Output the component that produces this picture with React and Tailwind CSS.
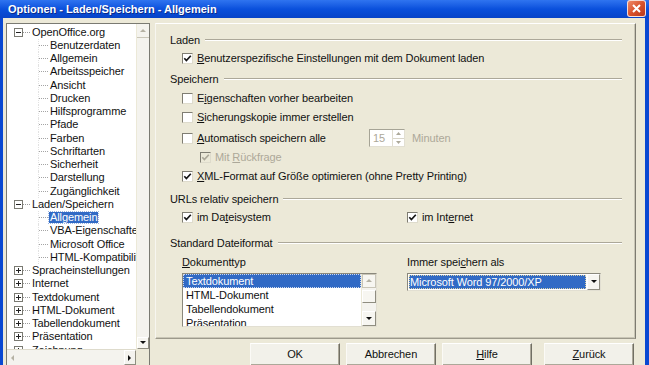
import React from "react";

const TREE = [
  ["OpenOffice.org", 0, "-"],
  ["Benutzerdaten", 1],
  ["Allgemein", 1],
  ["Arbeitsspeicher", 1],
  ["Ansicht", 1],
  ["Drucken", 1],
  ["Hilfsprogramme", 1],
  ["Pfade", 1],
  ["Farben", 1],
  ["Schriftarten", 1],
  ["Sicherheit", 1],
  ["Darstellung", 1],
  ["Zugänglichkeit", 1],
  ["Laden/Speichern", 0, "-"],
  ["Allgemein", 1, null, true],
  ["VBA-Eigenschaften", 1],
  ["Microsoft Office", 1],
  ["HTML-Kompatibilität", 1],
  ["Spracheinstellungen", 0, "+"],
  ["Internet", 0, "+"],
  ["Textdokument", 0, "+"],
  ["HTML-Dokument", 0, "+"],
  ["Tabellendokument", 0, "+"],
  ["Präsentation", 0, "+"],
  ["Zeichnung", 0, "+"],
];

function U({ children }) {
  return <span className="underline underline-offset-[1px]">{children}</span>;
}

function ExpandBox({ sign }) {
  return (
    <svg width="9" height="9" viewBox="0 0 9 9" className="shrink-0">
      <rect x="0.5" y="0.5" width="8" height="8" fill="#fff" stroke="#7a7a72" />
      <line x1="2" y1="4.5" x2="7" y2="4.5" stroke="#222" />
      {sign === "+" && <line x1="4.5" y1="2" x2="4.5" y2="7" stroke="#222" />}
    </svg>
  );
}

function Arrow({ dir, color = "#111" }) {
  const d = {
    up: "M1 5 L4 2 L7 5 Z",
    down: "M1 2 L4 5 L7 2 Z",
    left: "M5 1 L2 4 L5 7 Z",
    right: "M2 1 L5 4 L2 7 Z",
  }[dir];
  return (
    <svg width="8" height="8" viewBox="0 0 8 8">
      <path d={d} fill={color} />
    </svg>
  );
}

function Check({ checked, disabled }) {
  return (
    <span
      className={`w-[11px] h-[11px] shrink-0 flex items-center justify-center border border-t-[#7f7d72] border-l-[#7f7d72] border-r-[#dedbcc] border-b-[#dedbcc] ${
        disabled ? "bg-[#ece9d8]" : "bg-white"
      }`}
    >
      {checked && (
        <svg width="9" height="9" viewBox="0 0 9 9">
          <path
            d="M1.3 4.3 L3.4 6.6 L7.8 1.8"
            fill="none"
            stroke={disabled ? "#aca899" : "#151515"}
            strokeWidth="1.7"
          />
        </svg>
      )}
    </span>
  );
}

function Heading({ children, mt }) {
  return (
    <div className={`flex items-center h-[14px] pl-[14px] pr-[13px] ${mt}`}>
      <span className="whitespace-nowrap">{children}</span>
      <div className="flex-1 ml-[5px] border-t border-t-[#aca899] border-b border-b-white" />
    </div>
  );
}

function CheckRow({ checked, disabled, children, mt, pl = "pl-[26px]" }) {
  return (
    <div className={`flex items-center h-[14px] gap-[4px] ${pl} ${mt}`}>
      <Check checked={checked} disabled={disabled} />
      <span className={`whitespace-nowrap ${disabled ? "text-[#aca899]" : ""}`}>{children}</span>
    </div>
  );
}

function Button({ children, className = "" }) {
  return (
    <div
      className={`w-[90px] h-[23px] shrink-0 flex items-center justify-center bg-[#f2f1ea] border border-t-white border-l-[#fbfaf6] border-r-[#716f64] border-b-[#716f64] shadow-[inset_-1px_-1px_0_#aca899] ${className}`}
    >
      {children}
    </div>
  );
}

function Tree() {
  return (
    <div className="w-[144px] h-[345px] shrink-0 border border-[#7a7a72] flex flex-col bg-[#ece9d8]">
      <div className="flex h-[325px]">
        <div className="flex-1 bg-white overflow-hidden pt-[1.5px]">
          {TREE.map(([t, lvl, box, sel], i) => (
            <div key={i} className="h-[13.25px] flex items-center whitespace-nowrap">
              {lvl === 0 ? (
                <>
                  <div className="ml-[7px]">
                    <ExpandBox sign={box} />
                  </div>
                  <div className="w-[7px] border-t border-dotted border-[#9a9a9a]" />
                  <span className="ml-[2px]">{t}</span>
                </>
              ) : (
                <>
                  <div className="ml-[31px] h-full flex items-center border-l border-dotted border-[#e2e2e2]">
                    <div className="w-[9px] border-t border-dotted border-[#a4a4a4]" />
                  </div>
                  <span
                    className={`ml-[1px] px-[1px] ${
                      sel ? "bg-[#316ac5] text-white outline outline-dotted outline-[#9fb7e0]" : ""
                    }`}
                  >
                    {t}
                  </span>
                </>
              )}
            </div>
          ))}
        </div>
        <div className="w-[13px] flex flex-col bg-[#f4f3ee] border-l border-[#ece9d8]">
          <div className="h-[14px] flex items-center justify-center border-b border-[#c9c6b8]">
            <Arrow dir="up" color="#b5b2a4" />
          </div>
          <div className="flex-1" />
          <div className="h-[12px] flex items-center justify-center bg-[#f7f6f1] border border-t-white border-l-white border-r-[#8f8d80] border-b-[#8f8d80]">
            <Arrow dir="down" />
          </div>
        </div>
      </div>
      <div className="flex h-[16px]">
        <div className="w-[129px] flex items-center justify-between bg-[#f4f3ee] border-t border-[#dedbcc]">
          <div className="w-[12px] h-full flex items-center justify-center">
            <Arrow dir="left" color="#b5b2a4" />
          </div>
          <div className="w-[12px] h-full flex items-center justify-center border border-t-white border-l-white border-r-[#8f8d80] border-b-[#8f8d80]">
            <Arrow dir="right" />
          </div>
        </div>
        <div className="flex-1 bg-[#ece9d8]" />
      </div>
    </div>
  );
}

function Panel() {
  return (
    <div className="h-[316px] border border-t-white border-l-[#f7f6f0] border-r-[#7d7b70] border-b-[#9c998b] shadow-[inset_-1px_-1px_0_#c9c6b6]">
      <Heading mt="mt-[9px]">Laden</Heading>
      <CheckRow checked mt="mt-[4px]">
        <U>B</U>enutzerspezifische Einstellungen mit dem Dokument laden
      </CheckRow>
      <Heading mt="mt-[7px]">Speichern</Heading>
      <CheckRow mt="mt-[5px]">
        E<U>i</U>genschaften vorher bearbeiten
      </CheckRow>
      <CheckRow mt="mt-[5px]">
        <U>S</U>icherungskopie immer erstellen
      </CheckRow>
      <div className="flex items-center h-[18px] mt-[5px] pl-[26px]">
        <div className="w-[187px] flex items-center gap-[4px]">
          <Check />
          <span className="whitespace-nowrap">
            <U>A</U>utomatisch speichern alle
          </span>
        </div>
        <div className="w-[36px] h-[18px] flex items-center bg-white border border-t-[#a6a496] border-l-[#a6a496] border-r-[#e2dfd2] border-b-[#e2dfd2]">
          <span className="flex-1 pl-[3px] text-[#aca899]">15</span>
          <div className="w-[12px] h-full flex flex-col border-l border-[#e0ddd0]">
            <div className="flex-1 flex items-center justify-center border-b border-[#d8d5c8]">
              <svg width="5" height="3" viewBox="0 0 5 3">
                <path d="M0 3 L2.5 0 L5 3 Z" fill="#aca899" />
              </svg>
            </div>
            <div className="flex-1 flex items-center justify-center">
              <svg width="5" height="3" viewBox="0 0 5 3">
                <path d="M0 0 L2.5 3 L5 0 Z" fill="#aca899" />
              </svg>
            </div>
          </div>
        </div>
        <span className="ml-[7px] text-[#aca899]">Minuten</span>
      </div>
      <CheckRow checked disabled mt="mt-[3px]" pl="pl-[44px]">
        Mit <U>R</U>ückfrage
      </CheckRow>
      <CheckRow checked mt="mt-[5px]">
        <U>X</U>ML-Format auf Größe optimieren (ohne Pretty Printing)
      </CheckRow>
      <Heading mt="mt-[9px]">URLs relativ speichern</Heading>
      <div className="flex items-center h-[14px] mt-[4px] pl-[26px]">
        <div className="w-[225px] flex items-center gap-[4px]">
          <Check checked />
          <span>
            im Da<U>t</U>eisystem
          </span>
        </div>
        <div className="flex items-center gap-[4px]">
          <Check checked />
          <span>
            im Int<U>e</U>rnet
          </span>
        </div>
      </div>
      <Heading mt="mt-[12px]">Standard Dateiformat</Heading>
      <div className="flex items-center h-[14px] mt-[5px] pl-[26px]">
        <span className="w-[225px]">
          <U>D</U>okumenttyp
        </span>
        <span>
          Immer spei<U>c</U>hern als
        </span>
      </div>
      <div className="flex items-start mt-[4px] pl-[26px]">
        <div className="w-[195px] h-[54px] flex bg-white border border-t-[#8a887c] border-l-[#8a887c] border-r-[#e2dfd2] border-b-[#e2dfd2] overflow-hidden">
          <div className="flex-1 flex flex-col">
            {["Textdokument", "HTML-Dokument", "Tabellendokument", "Präsentation"].map((t, i) => (
              <div
                key={t}
                className={`h-[14px] shrink-0 flex items-center pl-[3px] whitespace-nowrap ${
                  i === 0 ? "bg-[#316ac5] text-white outline outline-dotted outline-[#cfd9ec] -outline-offset-1" : ""
                }`}
              >
                {t}
              </div>
            ))}
          </div>
          <div className="w-[15px] flex flex-col bg-[#f4f3ee] border-l border-[#ece9d8]">
            <div className="h-[14px] flex items-center justify-center bg-[#f7f6f1] border border-[#c9c6b8]">
              <Arrow dir="up" color="#b5b2a4" />
            </div>
            <div className="h-[13px] mt-[2px] bg-[#f7f6f1] border border-t-white border-l-white border-r-[#8f8d80] border-b-[#8f8d80]" />
            <div className="flex-1" />
            <div className="h-[15px] flex items-center justify-center bg-[#f7f6f1] border border-t-white border-l-white border-r-[#8f8d80] border-b-[#8f8d80]">
              <Arrow dir="down" />
            </div>
          </div>
        </div>
        <div className="ml-[30px] w-[194px] h-[18px] flex bg-white border border-t-[#8a887c] border-l-[#8a887c] border-r-[#e2dfd2] border-b-[#e2dfd2]">
          <div className="flex-1 m-[1px] bg-[#316ac5] text-white flex items-center pl-[1px] whitespace-nowrap outline outline-dotted outline-[#d8d0a8] -outline-offset-1">
            Microsoft Word 97/2000/XP
          </div>
          <div className="w-[13px] flex items-center justify-center bg-[#f7f6f1] border border-t-white border-l-white border-r-[#8f8d80] border-b-[#8f8d80]">
            <Arrow dir="down" />
          </div>
        </div>
      </div>
    </div>
  );
}

export default function App() {
  return (
    <div className="w-[649px] h-[365px] overflow-hidden flex flex-col bg-[#0a48d2] text-[11px] leading-none tracking-[-0.1px] text-[#111] font-['Liberation_Sans',Arial,sans-serif]">
      <div className="h-[18px] shrink-0 flex items-center justify-between pl-[8px] pr-[3px] bg-gradient-to-b from-[#2f74f0] via-[#0a50dc] to-[#0744c8]">
        <span className="text-white font-bold tracking-normal [text-shadow:1px_1px_0_#0a2a8a]">
          Optionen - Laden/Speichern - Allgemein
        </span>
        <div className="w-[19px] h-[17px] -mt-[1px] rounded-[3px] border border-white/80 bg-gradient-to-br from-[#ee8866] via-[#d9522c] to-[#b8381a] flex items-center justify-center">
          <svg width="9" height="9" viewBox="0 0 9 9">
            <path d="M1 1 L8 8 M8 1 L1 8" stroke="#fff" strokeWidth="2" />
          </svg>
        </div>
      </div>
      <div className="flex-1 ml-[3px] mr-[4px] bg-[#ece9d8] flex pt-[5px] pl-[3px]">
        <Tree />
        <div className="ml-[5px] w-[481px] flex flex-col">
          <Panel />
          <div className="flex mt-[4px] pl-[95px] gap-[6px]">
            <Button>OK</Button>
            <Button>Abbrechen</Button>
            <Button>
              <U>H</U>ilfe
            </Button>
            <Button className="ml-[6px]">
              <U>Z</U>urück
            </Button>
          </div>
        </div>
      </div>
    </div>
  );
}
